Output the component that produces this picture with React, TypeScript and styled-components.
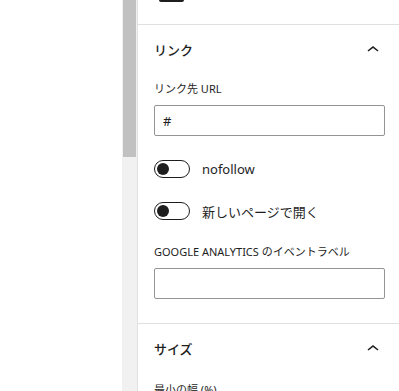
import styled, { createGlobalStyle } from 'styled-components';

const GlobalStyle = createGlobalStyle`
  html, body {
    margin: 0;
    padding: 0;
    background: #fff;
  }
  body {
    font-family: "Noto Sans", "Noto Sans CJK JP", sans-serif;
    color: #1e1e1e;
  }
`;

const Page = styled.div`
  display: flex;
  width: 399px;
  height: 391px;
  overflow: hidden;
`;

const Canvas = styled.div`
  width: 122px;
  flex-shrink: 0;
  background: #fff;
`;

const ScrollTrack = styled.div`
  width: 16px;
  flex-shrink: 0;
  background: #f1f1f1;
  padding-left: 1px;
  box-sizing: border-box;
  border-right: 1px solid #e0e0e0;
`;

const ScrollThumb = styled.div`
  width: 13px;
  height: 157px;
  background: #c1c1c1;
`;

const Sidebar = styled.div`
  flex: 1;
  display: flex;
  flex-direction: column;
  min-width: 0;

  & > * {
    flex-shrink: 0;
  }
`;

const TopRemnant = styled.div`
  height: 24px;
  border-bottom: 1px solid #e0e0e0;
  padding-left: 21px;
`;

const CutOffControl = styled.div`
  width: 25px;
  height: 2px;
  background: #1e1e1e;
  border-radius: 0 0 2px 2px;
`;

const Section = styled.section<{ $last?: boolean }>`
  padding: 0 14px ${({ $last }) => ($last ? '0' : '24px')} 16px;
  border-bottom: ${({ $last }) => ($last ? 'none' : '1px solid #e0e0e0')};
`;

const SectionHeader = styled.div`
  height: 50px;
  display: flex;
  align-items: center;
  justify-content: space-between;

  h2 {
    margin: 0;
    font-size: 13px;
    font-weight: 500;
    line-height: 16px;
  }

  svg {
    width: 24px;
    height: 24px;
    fill: #1e1e1e;
  }
`;

const FieldLabel = styled.label<{ $gap?: number }>`
  display: block;
  margin-top: ${({ $gap }) => $gap ?? 6}px;
  margin-bottom: 8px;
  font-size: 11px;
  line-height: 16px;
  font-weight: 400;
`;

const TextInput = styled.input`
  display: block;
  width: 100%;
  height: 31px;
  box-sizing: border-box;
  border: 1px solid #949494;
  border-radius: 2px;
  padding: 0 8px;
  font-family: "Noto Sans", "Noto Sans CJK JP", sans-serif;
  font-size: 13px;
  color: #1e1e1e;
  background: #fff;
  outline: none;
`;

const ToggleRow = styled.div`
  display: flex;
  align-items: center;
  gap: 12px;
  margin-top: 24px;
  height: 18px;
  font-size: 13px;
`;

const ToggleTrack = styled.span`
  position: relative;
  width: 36px;
  height: 18px;
  box-sizing: border-box;
  border: 1px solid #1e1e1e;
  border-radius: 9px;
  background: #fff;
  flex-shrink: 0;

  &::after {
    content: '';
    position: absolute;
    top: 2px;
    left: 2px;
    width: 12px;
    height: 12px;
    border-radius: 50%;
    background: #1e1e1e;
  }
`;

function ChevronUp() {
  return (
    <svg viewBox="0 0 24 24" aria-hidden="true">
      <path d="M6.5 12.4L12 8l5.5 4.4-.9 1.2L12 10l-4.5 3.6-1-1.2z" />
    </svg>
  );
}

type ToggleProps = {
  label: string;
};

function Toggle({ label }: ToggleProps) {
  return (
    <ToggleRow>
      <ToggleTrack />
      <span>{label}</span>
    </ToggleRow>
  );
}

export default function App() {
  return (
    <>
      <GlobalStyle />
      <Page>
        <Canvas />
        <ScrollTrack>
          <ScrollThumb />
        </ScrollTrack>
        <Sidebar>
          <TopRemnant>
            <CutOffControl />
          </TopRemnant>
          <Section>
            <SectionHeader>
              <h2>リンク</h2>
              <ChevronUp />
            </SectionHeader>
            <FieldLabel>リンク先 URL</FieldLabel>
            <TextInput defaultValue="#" />
            <Toggle label="nofollow" />
            <Toggle label="新しいページで開く" />
            <FieldLabel $gap={24}>GOOGLE ANALYTICS のイベントラベル</FieldLabel>
            <TextInput />
          </Section>
          <Section $last>
            <SectionHeader>
              <h2>サイズ</h2>
              <ChevronUp />
            </SectionHeader>
            <FieldLabel $gap={8}>最小の幅 (%)</FieldLabel>
          </Section>
        </Sidebar>
      </Page>
    </>
  );
}
